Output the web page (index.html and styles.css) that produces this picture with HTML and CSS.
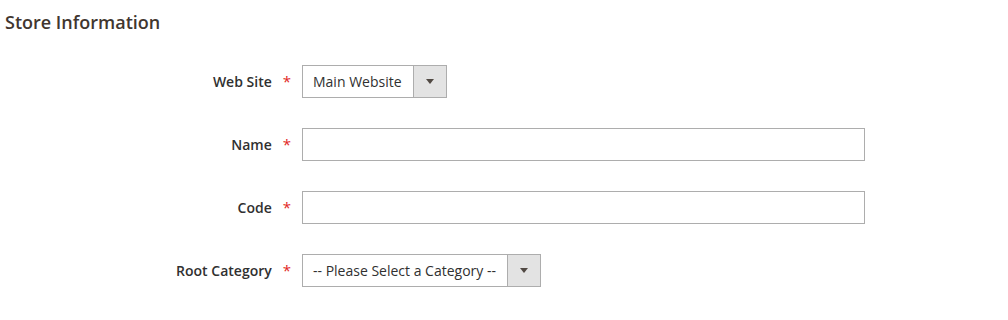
FILE: index.html
```html
<!DOCTYPE html>
<html lang="en">

<head>
  <meta charset="UTF-8">
  <meta name="viewport" content="width=device-width, initial-scale=1.0">
  <title>Store Information</title>
  <link rel="stylesheet" href="styles.css">
</head>

<body>
  <h2 class="section-title">Store Information</h2>

  <!-- Store form -->
  <form class="store-form">
    <div class="field">
      <label class="field-label" for="website">Web Site<span class="required">*</span></label>
      <div class="select-box">
        <span class="select-value">Main Website</span>
        <span class="select-arrow"></span>
      </div>
    </div>

    <div class="field">
      <label class="field-label" for="store-name">Name<span class="required">*</span></label>
      <input class="text-input" type="text" id="store-name">
    </div>

    <div class="field">
      <label class="field-label" for="store-code">Code<span class="required">*</span></label>
      <input class="text-input" type="text" id="store-code">
    </div>

    <div class="field">
      <label class="field-label" for="root-category">Root Category<span class="required">*</span></label>
      <div class="select-box">
        <span class="select-value">-- Please Select a Category --</span>
        <span class="select-arrow"></span>
      </div>
    </div>
  </form>
</body>

</html>
```

FILE: styles.css
```css
body {
  font-family: "Open Sans", Arial, sans-serif;
  background-color: #fff;
  color: #303030;
  margin: 0;
  padding: 0;
}

.section-title {
  margin: 0;
  padding: 10px 5px 0;
  font-size: 18px;
  font-weight: 600;
  line-height: 25px;
  color: #41362f;
}

.store-form {
  display: flex;
  flex-direction: column;
  gap: 30px;
  padding-top: 30px;
}

.field {
  display: flex;
  align-items: center;
  height: 33px;
}

.field-label {
  width: 302px;
  box-sizing: border-box;
  padding-right: 11px;
  padding-bottom: 1px;
  text-align: right;
  font-size: 14px;
  font-weight: 600;
  color: #303030;
}

.required {
  color: #e22626;
  margin-left: 11px;
  font-weight: 400;
  font-size: 15px;
}

.text-input {
  width: 563px;
  height: 33px;
  box-sizing: border-box;
  border: 1px solid #adadad;
  padding: 0 10px;
  font-family: inherit;
  font-size: 14px;
  margin: 0;
}

.select-box {
  display: flex;
  height: 33px;
  box-sizing: border-box;
  border: 1px solid #adadad;
  font-size: 14px;
}

.select-value {
  display: flex;
  align-items: center;
  padding: 0 11px 0 10px;
  color: #303030;
}

.select-arrow {
  width: 32px;
  background-color: #e3e3e3;
  border-left: 1px solid #adadad;
  position: relative;
}

.select-arrow::after {
  content: "";
  position: absolute;
  left: 12px;
  top: 13px;
  border-left: 4px solid transparent;
  border-right: 4px solid transparent;
  border-top: 5px solid #514943;
}
```
